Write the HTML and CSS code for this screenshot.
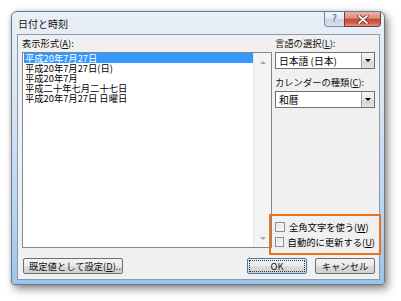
FILE: index.html
```html
<!DOCTYPE html>
<html lang="ja">
<head>
    <meta charset="UTF-8">
    <title>日付と時刻</title>
    <link rel="stylesheet" href="styles.css">
</head>
<body>
    <div class="window">
        <div class="titlebar">
            <span class="title">日付と時刻</span>
            <div class="caption-btns">
                <div class="cap-help">?</div>
                <div class="cap-close">
                    <svg width="12" height="9" viewBox="0 0 12 9">
                        <path d="M2 1 L10 8 M10 1 L2 8" stroke="#5a1a10" stroke-width="3.2" stroke-linecap="round"/>
                        <path d="M2 1 L10 8 M10 1 L2 8" stroke="#fff" stroke-width="1.8" stroke-linecap="round"/>
                    </svg>
                </div>
            </div>
        </div>

        <div class="client">
            <div class="col-left">
                <div class="label">表示形式(<u>A</u>):</div>
                <div class="listbox">
                    <div class="list-items">
                        <div class="item selected">平成20年7月27日</div>
                        <div class="item">平成20年7月27日(日)</div>
                        <div class="item">平成20年7月</div>
                        <div class="item">平成二十年七月二十七日</div>
                        <div class="item">平成20年7月27日 日曜日</div>
                    </div>
                    <div class="scrollbar">
                        <span class="arrow up"></span>
                        <span class="arrow down"></span>
                    </div>
                </div>
            </div>

            <div class="col-right">
                <div class="label">言語の選択(<u>L</u>):</div>
                <div class="combo">
                    <span class="combo-text">日本語 (日本)</span>
                    <span class="combo-btn"><span class="tri"></span></span>
                </div>
                <div class="label second">カレンダーの種類(<u>C</u>):</div>
                <div class="combo">
                    <span class="combo-text">和暦</span>
                    <span class="combo-btn"><span class="tri"></span></span>
                </div>

                <div class="checks">
                    <div class="check-row">
                        <span class="checkbox"></span>
                        <span>全角文字を使う(<u>W</u>)</span>
                    </div>
                    <div class="check-row">
                        <span class="checkbox"></span>
                        <span>自動的に更新する(<u>U</u>)</span>
                    </div>
                </div>
            </div>

            <div class="button-row">
                <button class="btn btn-default-set">既定値として設定(<u>D</u>)...</button>
                <div class="spacer"></div>
                <button class="btn btn-ok"><span class="focus-rect">OK</span></button>
                <button class="btn btn-cancel">キャンセル</button>
            </div>
        </div>
    </div>
</body>
</html>
```

FILE: styles.css
```css
* {
    margin: 0;
    padding: 0;
    box-sizing: border-box;
}

body {
    font-family: "Noto Sans CJK JP", "Noto Sans", sans-serif;
    font-size: 9.3px;
    color: #000;
    background: #fff;
    width: 401px;
    height: 301px;
    overflow: hidden;
}

.window {
    margin: 11px 0 0 11px;
    width: 374px;
    height: 274px;
    border: 1px solid #6a7b90;
    border-radius: 6px 6px 3px 3px;
    background: linear-gradient(180deg, #e9eff6 0%, #dbe6f2 30%, #b9d3ee 75%, #9cc3ea 100%);
    box-shadow: 3px 4px 9px rgba(0, 0, 0, 0.45), 0 0 4px rgba(0, 0, 0, 0.15);
    padding: 0 4px 4px 5px;
    display: flex;
    flex-direction: column;
}

.titlebar {
    height: 22px;
    display: flex;
    justify-content: space-between;
    align-items: center;
}

.title {
    font-size: 10px;
    margin-left: 1px;
    margin-top: 1px;
    color: #111;
}

.caption-btns {
    align-self: flex-start;
    display: flex;
    margin-right: -1px;
}

.cap-help {
    width: 20px;
    height: 15px;
    border: 1px solid #7a8ba0;
    border-top: none;
    border-right: none;
    border-radius: 0 0 0 4px;
    background: linear-gradient(180deg, #f2f6fa 0%, #dfe7f0 50%, #c8d5e4 51%, #d6e1ee 100%);
    color: #4f6580;
    font-family: "DejaVu Sans", sans-serif;
    font-size: 10px;
    text-align: center;
    line-height: 14px;
}

.cap-close {
    width: 37px;
    height: 15px;
    border: 1px solid #7a3b30;
    border-top: none;
    border-radius: 0 0 4px 0;
    background: linear-gradient(180deg, #eab2a6 0%, #dc8b7b 45%, #c8452f 50%, #d0634e 80%, #e09583 100%);
    display: flex;
    align-items: center;
    justify-content: center;
}

.client {
    flex: 1;
    border: 1px solid #8a9bb1;
    background: #f0f0f0;
    padding: 2px 4px 5px 4px;
    display: grid;
    grid-template-columns: 250px 100px;
    grid-template-rows: 211px 16px;
    column-gap: 3px;
    row-gap: 10px;
}

.label {
    height: 12px;
    line-height: 12px;
    color: #111;
}

.label.second {
    margin-top: 7px;
}

/* list box */
.col-left {
    display: flex;
    flex-direction: column;
}

.listbox {
    margin-top: 3px;
    flex: 1;
    border: 1px solid #828790;
    background: #fff;
    display: flex;
}

.list-items {
    flex: 1;
    padding: 0 0 0 1px;
}

.item {
    height: 10px;
    line-height: 10px;
    padding-left: 1px;
    white-space: nowrap;
}

.item.selected {
    background: #3399ff;
    color: #fff;
}

.scrollbar {
    width: 18px;
    background: #f4f4f4;
    border-left: 1px solid #e6e6e6;
    display: flex;
    flex-direction: column;
    justify-content: space-between;
    align-items: center;
    padding: 8px 0 7px;
}

.arrow {
    width: 0;
    height: 0;
    border-left: 3px solid transparent;
    border-right: 3px solid transparent;
}

.arrow.up {
    border-bottom: 3px solid #a9a9a9;
}

.arrow.down {
    border-top: 3px solid #a9a9a9;
}

/* right column */
.col-right {
    display: flex;
    flex-direction: column;
}

.combo {
    margin-top: 3px;
    height: 17px;
    border: 1px solid #707070;
    background: #fff;
    display: flex;
    align-items: center;
}

.combo-text {
    flex: 1;
    padding-left: 3px;
    font-size: 9.8px;
}

.combo-btn {
    width: 13px;
    height: 15px;
    border-left: 1px solid #a0a0a0;
    background: linear-gradient(180deg, #f6f6f6 0%, #e6e6e6 50%, #d6d6d6 51%, #e2e2e2 100%);
    display: flex;
    align-items: center;
    justify-content: center;
}

.tri {
    width: 0;
    height: 0;
    border-left: 3px solid transparent;
    border-right: 3px solid transparent;
    border-top: 3px solid #000;
}

.checks {
    margin-top: auto;
    margin-bottom: -1px;
    outline: 2px solid #e8731c;
    outline-offset: 4px;
    display: flex;
    flex-direction: column;
    gap: 1px;
}

.check-row {
    height: 14px;
    display: flex;
    align-items: center;
    gap: 4px;
    white-space: nowrap;
}

.checkbox {
    width: 10px;
    height: 10px;
    border: 1px solid #8e8f8f;
    background: linear-gradient(135deg, #dcdcdc 0%, #f2f2f2 60%, #fff 100%);
    box-shadow: inset 0 0 0 1px #f4f4f4;
}

/* buttons */
.button-row {
    grid-column: 1 / 3;
    display: flex;
    gap: 8px;
}

.spacer {
    flex: 1;
}

.btn {
    height: 16px;
    border: 1px solid #707070;
    border-radius: 2px;
    background: linear-gradient(180deg, #f2f2f2 0%, #ebebeb 50%, #dddddd 51%, #cfcfcf 100%);
    font-family: inherit;
    font-size: 9.3px;
    color: #111;
    line-height: 13px;
    white-space: nowrap;
}

.btn-default-set {
    width: 100px;
    margin-left: 1px;
    text-align: left;
    padding-left: 5px;
    padding-right: 0;
    overflow: hidden;
}

.btn-ok {
    width: 60px;
    border-color: #3c7fb1;
    padding: 1px;
}

.focus-rect {
    display: block;
    height: 12px;
    border: 1px dotted #333;
    line-height: 10px;
}

.btn-cancel {
    width: 60px;
}
```
